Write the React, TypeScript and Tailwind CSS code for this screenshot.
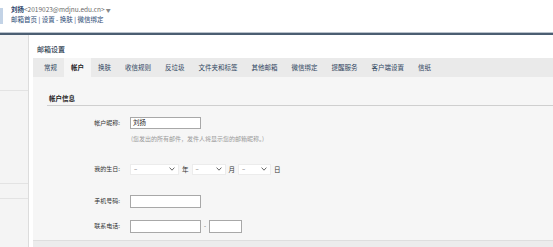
import React from 'react'

const tabs = ['常规', '帐户', '换肤', '收信规则', '反垃圾', '文件夹和标签', '其他邮箱', '微信绑定', '提醒服务', '客户端设置', '信纸']

const Chevron = () => (
  <svg width="6" height="4" viewBox="0 0 6 4" fill="none">
    <path d="M0.6 0.6L3 3.2L5.4 0.6" stroke="#555" strokeWidth="0.9" />
  </svg>
)

const FakeSelect = ({ width }: { width: string }) => (
  <div className={`${width} h-[11px] bg-white border border-[#ececec] flex items-center justify-between pl-[3px] pr-[3px]`}>
    <span className="text-[6px] text-[#555] leading-none">–</span>
    <Chevron />
  </div>
)

const Label = ({ children }: { children: React.ReactNode }) => (
  <div className="w-[87px] shrink-0 text-right text-[6px] text-[#333] leading-none">{children}</div>
)

export default function App() {
  return (
    <div className="w-[553px] h-[247px] overflow-hidden bg-white flex flex-col font-['Noto_Sans_CJK_SC','Noto_Sans',sans-serif]">
      {/* Header */}
      <div className="h-[32px] flex shrink-0">
        <div className="w-[3px] h-[16px] mt-[8px] bg-[#c3d3e6]" />
        <div className="pl-[8px] pt-[6px] flex flex-col gap-[3px] leading-none">
          <div className="flex items-center text-[6.5px]">
            <span className="font-bold text-[#1f3d66]">刘扬</span>
            <span className="text-[#6a6a6a]">&lt;2019023@mdjnu.edu.cn&gt;</span>
            <span className="text-[#888] text-[5px] ml-[1px]">▼</span>
          </div>
          <div className="text-[6.5px] text-[#2c4a74]">邮箱首页 | 设置 - 换肤 | 微信绑定</div>
        </div>
      </div>
      <div className="h-[1px] bg-[#b9c2cc] shrink-0" />
      <div className="h-[2px] bg-[#4b5e72] shrink-0" />

      {/* Body */}
      <div className="flex flex-1 min-h-0">
        {/* Sidebar */}
        <div className="w-[29px] shrink-0 bg-[#f4f4f4] border-r border-[#dcdcdc] flex flex-col">
          <div className="h-[56px] border-b border-[#e3e3e3]" />
          <div className="h-[93px] border-b border-[#e3e3e3]" />
          <div className="h-[15px] border-b border-[#e3e3e3]" />
        </div>
        <div className="w-[4px] shrink-0" />

        {/* Main */}
        <div className="flex-1 flex flex-col min-w-0">
          <div className="h-[23px] shrink-0 flex items-end pb-[5px] pl-[4px] text-[7px] text-[#2d3e50] font-medium leading-none">
            邮箱设置
          </div>
          <div className="h-[19px] shrink-0 bg-[#eaeaea] flex items-stretch pl-[4px]">
            {tabs.map((t) => (
              <div
                key={t}
                className={`px-[7px] flex items-center text-[6.5px] leading-none ${
                  t === '帐户' ? 'bg-[#f6f6f6] text-[#222] font-bold' : 'text-[#2f4560]'
                }`}
              >
                {t}
              </div>
            ))}
          </div>

          <div className="flex-1 bg-[#f6f6f6] flex flex-col border-b border-[#dedede]">
            <div className="ml-[14px] mt-[18px] pb-[3px] pl-[2px] border-b border-[#cfcfcf] text-[6.5px] font-bold text-[#222] leading-none">
              帐户信息
            </div>

            <div className="flex items-center mt-[11px]">
              <Label>帐户昵称:</Label>
              <div className="ml-[10px] w-[71px] h-[12px] bg-white border border-[#a8a8a8] flex items-center pl-[2px] text-[6.5px] text-[#222] leading-none">
                刘扬
              </div>
            </div>
            <div className="ml-[98px] mt-[7px] text-[6px] text-[#9a9a9a] leading-none">
              (您发出的所有邮件，发件人将显示您的邮箱昵称。)
            </div>

            <div className="flex items-center mt-[22px]">
              <Label>我的生日:</Label>
              <div className="ml-[10px] flex items-center gap-[3px] text-[6.5px] text-[#333] leading-none">
                <FakeSelect width="w-[49px]" />
                <span>年</span>
                <FakeSelect width="w-[34px]" />
                <span>月</span>
                <FakeSelect width="w-[33px]" />
                <span>日</span>
              </div>
            </div>

            <div className="flex items-center mt-[20px]">
              <Label>手机号码:</Label>
              <div className="ml-[10px] w-[71px] h-[13px] bg-white border border-[#a8a8a8]" />
            </div>

            <div className="flex items-center mt-[12px]">
              <Label>联系电话:</Label>
              <div className="ml-[10px] flex items-center">
                <div className="w-[71px] h-[13px] bg-white border border-[#a8a8a8]" />
                <span className="mx-[3px] text-[6px] text-[#555] leading-none">-</span>
                <div className="w-[33px] h-[13px] bg-white border border-[#a8a8a8]" />
              </div>
            </div>
          </div>
          <div className="h-[6px] shrink-0 bg-[#ececec]" />
        </div>
      </div>
    </div>
  )
}
